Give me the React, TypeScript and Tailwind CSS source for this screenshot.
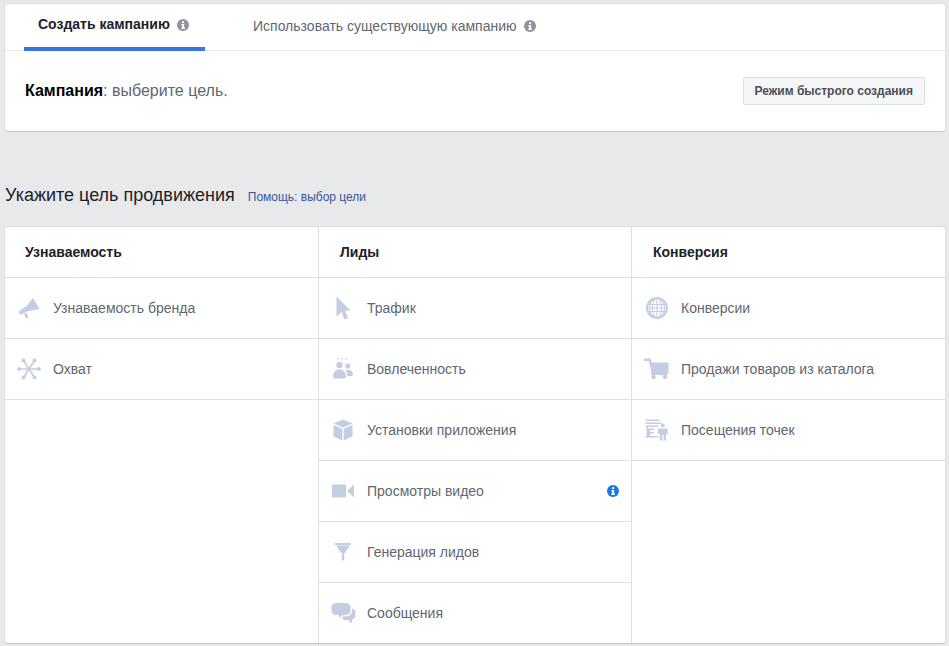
import type { ReactNode } from "react";

const Fill = "#c4cde2";

function InfoDot({ color }: { color: string }) {
  return (
    <svg width="12" height="12" viewBox="0 0 12 12" className="shrink-0">
      <circle cx="6" cy="6" r="6" fill={color} />
      <rect x="5" y="2.2" width="2.1" height="1.9" fill="#fff" />
      <path d="M4.3 5h2.8v3.6h.8V10H4.3V8.6h.8V6.3h-.8z" fill="#fff" />
    </svg>
  );
}

const Megaphone = () => (
  <svg width="22" height="22" viewBox="0 0 22 22" fill={Fill}>
    <path d="M15 1 21.500 12 9 14.500 3.500 17.500Q1 17.500.8 15.500.8 13.500 2.500 13L8.500 9z" />
    <path d="M5.800 17l3-1 1.700 4.300-2.300 1z" />
  </svg>
);

const Reach = () => (
  <svg width="24" height="24" viewBox="0 0 24 24" fill={Fill} stroke={Fill}>
    <path d="M12 12 6.500 3.500M12 12l5.500-8.500M12 12H2M12 12h10M12 12l-5.500 8.500M12 12l5.500 8.500" strokeWidth="1.700" />
    <circle cx="6.500" cy="3.500" r="2" stroke="none" />
    <circle cx="17.500" cy="3.500" r="2" stroke="none" />
    <circle cx="2.200" cy="12" r="2.100" stroke="none" />
    <circle cx="21.800" cy="12" r="2.100" stroke="none" />
    <circle cx="6.500" cy="20.500" r="2" stroke="none" />
    <circle cx="17.500" cy="20.500" r="2" stroke="none" />
  </svg>
);

const Cursor = () => (
  <svg width="16" height="24" viewBox="0 0 16 24">
    <path d="M1.500 .5 15.500 14.500 10 14.800 13 22 9.500 23.500 6.800 16 1.500 20.500z" fill={Fill} />
  </svg>
);

const People = () => (
  <svg width="22" height="24" viewBox="0 0 22 24" fill={Fill}>
    <rect x="5.500" y="1" width="1.500" height="1.500" />
    <rect x="9.500" y="1" width="1.500" height="1.500" />
    <rect x="13.500" y="1" width="1.500" height="1.500" />
    <circle cx="7.500" cy="8" r="3.200" />
    <circle cx="15.800" cy="9" r="2.600" />
    <path d="M1 20c0-5 2.500-7.500 6.500-7.500S14 15 14 20c0 .8-.8 1.500-1.500 1.500H2.500C1.600 21.500 1 20.800 1 20z" />
    <path d="M15 12.800c3.800-.4 6 1.800 6 4.700 0 .8-.6 1.500-1.500 1.500h-4.300c-.1-2.200-.5-4.500-1.700-5.700.5-.3 1-.4 1.500-.5z" />
  </svg>
);

const Box = () => (
  <svg width="20" height="22" viewBox="0 0 20 22" fill={Fill}>
    <path d="M10 0.500 19.500 4.500 10 8.500 0.500 4.500z" />
    <path d="M0.500 6 9.300 9.800V21.500L.5 17.500z" />
    <path d="M19.500 6 10.700 9.800V21.500l8.800-4z" />
  </svg>
);

const Video = () => (
  <svg width="22" height="14" viewBox="0 0 22 14" fill={Fill}>
    <rect x="0" y="0.500" width="14" height="13" />
    <path d="M15 7 22 .5v13z" />
  </svg>
);

const Funnel = () => (
  <svg width="18" height="20" viewBox="0 0 18 20" fill={Fill}>
    <rect x="1" y="1" width="16" height="2" />
    <path d="M2 3.500h14L11 11H7z" />
    <rect x="7.800" y="11" width="2.400" height="7.500" rx="1" />
  </svg>
);

const Bubbles = () => (
  <svg width="25" height="23" viewBox="0 0 25 23" fill={Fill}>
    <path d="M5 1h10c2.500 0 4.500 1.800 4.500 4.300v3.400c0 2.500-2 4.300-4.500 4.300h-3.500L8 16.500V13H5C2.500 13 .5 11.200.5 8.700V5.300C.5 2.800 2.500 1 5 1z" />
    <path d="M21 6.500c2 .5 3.500 2 3.500 4v3c0 2.200-1.500 3.700-3.500 4v4L17 18h-4.500l-1.700-2 1.700-1.700H15c3.300 0 6-2.400 6-5.600z" />
  </svg>
);

const Globe = () => (
  <svg width="22" height="22" viewBox="0 0 22 22" fill="none" stroke={Fill} strokeWidth="1.100">
    <circle cx="11" cy="11" r="10" strokeWidth="2" />
    <ellipse cx="11" cy="11" rx="4.500" ry="10" />
    <path d="M11 1v20M1.500 7.500h19M1 11h20M1.500 14.500h19" />
    <ellipse cx="11" cy="11" rx="7.500" ry="10" />
  </svg>
);

const Cart = () => (
  <svg width="25" height="22" viewBox="0 0 25 22" fill={Fill}>
    <path d="M0 0.500h6.500L8 4.500h16.500V16H7.500L5 3H0z" />
    <circle cx="9.500" cy="19" r="2.200" />
    <circle cx="21" cy="19" r="2.200" />
    <rect x="7" y="16" width="16" height="1" />
  </svg>
);

const Storefront = () => (
  <svg width="23" height="22" viewBox="0 0 23 22" fill={Fill}>
    <rect x="0.500" y="0.500" width="14" height="1.500" />
    <rect x="0.500" y="3.500" width="16" height="1.500" />
    <rect x="0.500" y="6.500" width="13" height="1.500" />
    <path d="M1.500 8h1.500v9H1.500zM3 9.500h6V11H5v2h4v1.500H5V17H3z" />
    <rect x="0.500" y="17" width="13" height="1.500" />
    <circle cx="17.800" cy="6.500" r="2" />
    <path d="M14 9.500h7.500c.8 0 1.200.5 1.200 1.200V15H21v6.500h-2.500V16h-1.300v5.500h-2.500V15H13v-4.300c0-.7.400-1.200 1-1.200z" />
  </svg>
);

type Goal = { label: string; icon: ReactNode; info?: boolean };

function GoalRow({ goal, iconClass }: { goal: Goal; iconClass: string }) {
  return (
    <div className="flex h-[61px] items-center border-b border-[#dddfe2]">
      <div className={`flex shrink-0 items-center justify-center ${iconClass}`}>{goal.icon}</div>
      <span className="text-[14px] text-[#606770]">{goal.label}</span>
      {goal.info && (
        <span className="ml-auto mr-[12px]">
          <InfoDot color="#1877e6" />
        </span>
      )}
    </div>
  );
}

function Column({
  title,
  goals,
  className,
  titleClass,
  iconClass,
}: {
  title: string;
  goals: Goal[];
  className: string;
  titleClass: string;
  iconClass: string;
}) {
  return (
    <div className={className}>
      <div className={`flex h-[51px] items-center border-b border-[#dddfe2] text-[14px] font-bold text-[#1d2129] ${titleClass}`}>
        {title}
      </div>
      {goals.map((goal) => (
        <GoalRow key={goal.label} goal={goal} iconClass={iconClass} />
      ))}
    </div>
  );
}

const awareness: Goal[] = [
  { label: "Узнаваемость бренда", icon: <Megaphone /> },
  { label: "Охват", icon: <Reach /> },
];

const leads: Goal[] = [
  { label: "Трафик", icon: <Cursor /> },
  { label: "Вовлеченность", icon: <People /> },
  { label: "Установки приложения", icon: <Box /> },
  { label: "Просмотры видео", icon: <Video />, info: true },
  { label: "Генерация лидов", icon: <Funnel /> },
  { label: "Сообщения", icon: <Bubbles /> },
];

const conversion: Goal[] = [
  { label: "Конверсии", icon: <Globe /> },
  { label: "Продажи товаров из каталога", icon: <Cart /> },
  { label: "Посещения точек", icon: <Storefront /> },
];

export default function App() {
  return (
    <div className="h-[646px] w-[949px] overflow-hidden bg-[#e8e9eb] px-[4px] pt-[3px] font-['Liberation_Sans',Arial,sans-serif]">
      <section className="h-[129px] w-[942px] rounded-[4px] border border-[#dddfe2] border-b-[#c4c6ca] bg-white">
        <div className="flex h-[47px] border-b border-[#e9eaed] pl-[19px]">
          <div className="-mb-px flex w-[181px] items-center gap-[7px] border-b-[4px] border-[#3578e5] pb-[2px] pl-[14px] text-[14px] font-bold text-[#1d2129]">
            Создать кампанию
            <InfoDot color="#8d949e" />
          </div>
          <div className="ml-[48px] flex items-center gap-[7px] pb-[2px] text-[14px] text-[#606770]">
            Использовать существующую кампанию
            <InfoDot color="#8d949e" />
          </div>
        </div>
        <div className="flex h-[80px] items-center justify-between pl-[20px] pr-[20px]">
          <p className="text-[16px] text-[#606770]">
            <span className="font-bold text-black">Кампания</span>: выберите цель.
          </p>
          <button className="h-[28px] rounded-[2px] border border-[#dddfe2] bg-[#f5f6f7] px-[11px] text-[12px] font-bold text-[#4b4f56]">
            Режим быстрого создания
          </button>
        </div>
      </section>

      <div className="mt-[50px] flex items-baseline pl-[1px]">
        <h1 className="text-[18px] font-normal text-[#1d2129]">Укажите цель продвижения</h1>
        <a className="ml-[13px] text-[12px] text-[#365899]">Помощь: выбор цели</a>
      </div>

      <section className="mt-[17px] grid h-[418px] w-[942px] grid-cols-[314px_313px_1fr] overflow-hidden rounded-[4px] border border-[#dddfe2] border-b-[#c4c6ca] bg-white">
        <Column title="Узнаваемость" goals={awareness} className="border-r border-[#dddfe2]" titleClass="pl-[20px]" iconClass="w-[48px]" />
        <Column title="Лиды" goals={leads} className="border-r border-[#dddfe2]" titleClass="pl-[21px]" iconClass="w-[48px]" />
        <Column title="Конверсия" goals={conversion} className="" titleClass="pl-[21px]" iconClass="w-[49px]" />
      </section>
    </div>
  );
}
